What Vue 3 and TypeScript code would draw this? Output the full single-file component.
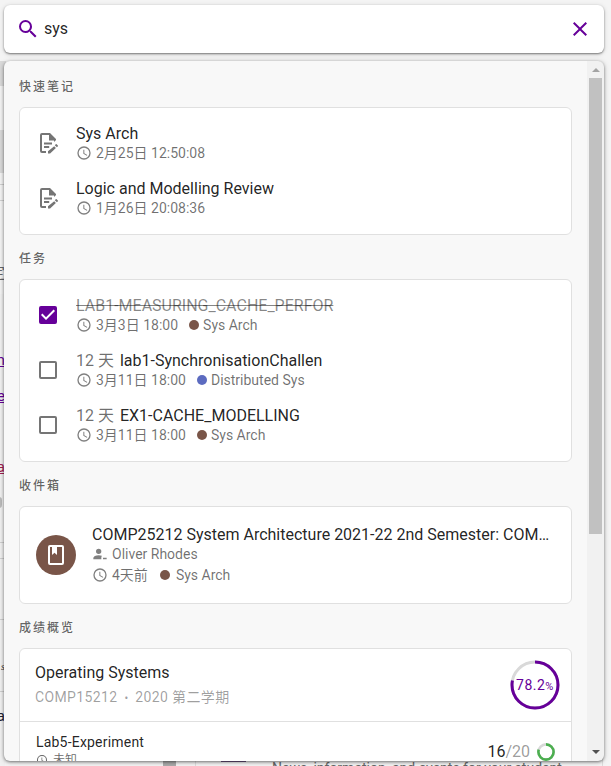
<script setup lang="ts">
interface Item {
  title: string
  time: string
  days?: string
  done?: boolean
  course?: string
  color?: string
}

const notes: Item[] = [
  { title: 'Sys Arch', time: '2月25日 12:50:08' },
  { title: 'Logic and Modelling Review', time: '1月26日 20:08:36' },
]

const tasks: Item[] = [
  { title: 'LAB1-MEASURING_CACHE_PERFOR', time: '3月3日 18:00', done: true, course: 'Sys Arch', color: 'brown' },
  { title: 'lab1-SynchronisationChallen', time: '3月11日 18:00', days: '12 天', course: 'Distributed Sys', color: 'indigo' },
  { title: 'EX1-CACHE_MODELLING', time: '3月11日 18:00', days: '12 天', course: 'Sys Arch', color: 'brown' },
]

const clock =
  'M12 20A8 8 0 1 0 12 4a8 8 0 0 0 0 16m0-18a10 10 0 1 1 0 20 10 10 0 0 1 0-20m.5 5v5.25l4.5 2.67-.75 1.23L11 13V7z'
</script>

<template>
  <div class="screen">
    <div class="backdrop">
      <i class="block b1"></i>
      <i class="block b2"></i>
      <i class="rule r1"></i>
      <i class="rule r2"></i>
      <i class="pale p1"></i>
      <span class="frag f1">定</span>
      <span class="frag link f2">m</span>
      <span class="frag link f3">e</span>
      <span class="frag link red f4">a</span>
      <i class="block b3"></i>
      <i class="rule r3"></i>
      <i class="rule r4"></i>
      <i class="rule r5"></i>
      <span class="frag serif f5">s</span>
      <i class="rule r6"></i>
      <span class="frag navy f6">a</span>
      <i class="block b4"></i>
      <i class="block b5"></i>
      <i class="below"></i>
      <span class="news">News, information, and events for your student</span>
    </div>

    <header class="search">
      <svg class="i24 purple" viewBox="0 0 24 24"><path d="M9.5 3A6.5 6.5 0 0 1 16 9.5c0 1.61-.59 3.09-1.56 4.23l.27.27h.79l5 5-1.5 1.5-5-5v-.79l-.27-.27A6.516 6.516 0 0 1 9.5 16a6.5 6.5 0 1 1 0-13m0 2C7 5 5 7 5 9.5S7 14 9.5 14 14 12 14 9.5 12 5 9.5 5" /></svg>
      <span class="query">sys</span>
      <svg class="i24 purple" viewBox="0 0 24 24"><path d="M19 6.41 17.59 5 12 10.59 6.41 5 5 6.41 10.59 12 5 17.59 6.41 19 12 13.41 17.59 19 19 17.59 13.41 12z" /></svg>
    </header>

    <main class="panel">
      <div class="content">
        <h2>快速笔记</h2>
        <section class="card list">
          <div v-for="n in notes" :key="n.title" class="row">
            <svg class="i24 grey" viewBox="0 0 24 24">
              <path d="M10 20H6V4h7v5h5v2.1l2-2V8l-6-6H6a2 2 0 0 0-2 2v16a2 2 0 0 0 2 2h4z" />
              <path d="M13 3v6.5h6.5z" />
              <path d="M8 11.6h8v1.9H8zM8 15h5.2v1.9H8z" />
              <path d="M20.2 13c.1 0 .3.1.4.2l1.3 1.3c.2.2.2.6 0 .8l-1 1-2.1-2.1 1-1c.1-.1.2-.2.4-.2m-2 2.2 1.7 1.7L14.1 22.4H12v-2.1z" />
            </svg>
            <div class="text">
              <div class="title">{{ n.title }}</div>
              <div class="meta"><svg class="i16" viewBox="0 0 24 24"><path :d="clock" /></svg><span>{{ n.time }}</span></div>
            </div>
          </div>
        </section>

        <h2>任务</h2>
        <section class="card list">
          <div v-for="t in tasks" :key="t.title" class="row">
            <svg v-if="t.done" class="i24 purple" viewBox="0 0 24 24"><path d="m10 17-5-5 1.41-1.42L10 14.17l7.59-7.59L19 8m0-5H5a2 2 0 0 0-2 2v14a2 2 0 0 0 2 2h14a2 2 0 0 0 2-2V5a2 2 0 0 0-2-2" /></svg>
            <svg v-else class="i24 grey" viewBox="0 0 24 24"><path d="M19 3H5a2 2 0 0 0-2 2v14a2 2 0 0 0 2 2h14a2 2 0 0 0 2-2V5a2 2 0 0 0-2-2m0 2v14H5V5z" /></svg>
            <div class="text">
              <div class="title" :class="{ done: t.done }"><span v-if="t.days" class="days">{{ t.days }}</span>{{ t.title }}</div>
              <div class="meta"><svg class="i16" viewBox="0 0 24 24"><path :d="clock" /></svg><span>{{ t.time }}</span><i class="dot" :class="t.color"></i><span>{{ t.course }}</span></div>
            </div>
          </div>
        </section>

        <h2>收件箱</h2>
        <section class="card list">
          <div class="row mail">
            <div class="avatar"><svg class="i24" viewBox="0 0 24 24"><path d="M18 2a2 2 0 0 1 2 2v16a2 2 0 0 1-2 2H6a2 2 0 0 1-2-2V4a2 2 0 0 1 2-2zm0 2h-5v8l-2.5-2.25L8 12V4H6v16h12z" /></svg></div>
            <div class="text">
              <div class="title clip">COMP25212 System Architecture 2021-22 2nd Semester: COMP25212 Lab</div>
              <div class="meta"><svg class="i16" viewBox="0 0 24 24"><path d="M10 4a4 4 0 1 1 0 8 4 4 0 0 1 0-8M14 20H2v-2c0-2.21 3.58-4 8-4 1.8 0 3.4.3 4.8.8L14 17zM16.5 17.8H22V20h-5.500z" /></svg><span>Oliver Rhodes</span></div>
              <div class="meta"><svg class="i16" viewBox="0 0 24 24"><path :d="clock" /></svg><span>4天前</span><i class="dot brown"></i><span>Sys Arch</span></div>
            </div>
          </div>
        </section>

        <h2>成绩概览</h2>
        <section class="card grades">
          <div class="course">
            <div class="text">
              <div class="title">Operating Systems</div>
              <div class="term">COMP15212 <b>•</b> 2020 第二学期</div>
            </div>
            <div class="ring">
              <svg viewBox="0 0 50 50"><circle class="track" cx="25" cy="25" r="23" /><circle class="bar" cx="25" cy="25" r="23" pathLength="100" stroke-dasharray="78.2 100" transform="rotate(-90 25 25)" /></svg>
              <span>78.2<small>%</small></span>
            </div>
          </div>
          <div class="grade">
            <div class="text">
              <div class="lab">Lab5-Experiment</div>
              <div class="unknown"><svg viewBox="0 0 24 24"><path :d="clock" /></svg><span>未知</span></div>
            </div>
            <div class="score">16<em>/20</em></div>
            <svg class="mini" viewBox="0 0 18 18"><circle class="track" cx="9" cy="9" r="7.6" /><circle class="bar" cx="9" cy="9" r="7.6" pathLength="100" stroke-dasharray="80 100" transform="rotate(-90 9 9)" /></svg>
          </div>
        </section>
      </div>
      <aside class="scroll">
        <i class="up"></i>
        <i class="thumb"></i>
        <i class="down"></i>
      </aside>
    </main>
  </div>
</template>

<style>
body { margin: 0; background: #f3f3f3; }
</style>

<style scoped>
* { box-sizing: border-box; }
.screen {
  position: relative;
  width: 611px;
  height: 766px;
  overflow: hidden;
  padding: 5px 7px 0 4px;
  background: #f4f4f4;
  font-family: Roboto, "Noto Sans CJK SC", sans-serif;
  color: rgba(0, 0, 0, 0.87);
}
svg { display: block; fill: currentColor; flex: none; }
.i24 { width: 24px; height: 24px; }
.i16 { width: 16px; height: 16px; }
.purple { color: #609; }
.grey { color: #757575; }

.backdrop { position: absolute; inset: 0; overflow: hidden; }
.backdrop > * { position: absolute; }
.block { background: #dadada; }
.b1 { left: 0; top: 61px; width: 6px; height: 25px; }
.b2 { left: 0; top: 130px; width: 5px; height: 43px; }
.b3 { left: -4px; top: 497px; width: 6px; height: 11px; border-radius: 3px; background: #bbb; }
.b4 { left: 163px; top: 755px; width: 13px; height: 11px; background: #aaa; }
.b5 { left: 221px; top: 755px; width: 25px; height: 7px; background: #6b5380; }
.pale { left: 0; top: 294px; width: 5px; height: 472px; background: #f1f1f1; }
.rule { left: 0; width: 5px; height: 1px; background: #d0d0d0; }
.r1 { top: 184px; } .r2 { top: 200px; } .r3 { top: 542px; }
.r4 { top: 558px; } .r5 { top: 619px; } .r6 { top: 691px; }
.frag { width: 15px; right: 606px; text-align: right; font-size: 15px; line-height: 18px; color: #666; }
.link { color: #609; text-decoration: underline; }
.red { color: #a02050; }
.f1 { top: 264px; } .f2 { top: 351px; } .f3 { top: 387px; } .f4 { top: 458px; }
.serif { font: italic 10px/12px "Liberation Serif", serif; color: #333; }
.f5 { top: 661px; } .f6 { top: 707px; }
.navy { color: #223; }
.below { left: 195px; top: 755px; width: 408px; height: 11px; border: solid #ddd; border-width: 0 1px; }
.news { left: 272px; top: 758px; white-space: nowrap; font-size: 14px; line-height: 20px; color: #666; }

.search {
  position: relative;
  display: flex;
  align-items: center;
  width: 600px;
  height: 48px;
  padding: 0 12px;
  border-radius: 6px;
  background: #fff;
  box-shadow: 0 1px 2px rgba(0, 0, 0, 0.45), 0 1px 5px rgba(0, 0, 0, 0.16);
}
.query { flex: 1; padding-left: 4px; font-size: 16px; line-height: 24px; }

.panel {
  position: relative;
  display: flex;
  width: 600px;
  height: 700px;
  margin-top: 8px;
  overflow: hidden;
  border-radius: 6px;
  background: #f8f8f8;
}
.screen::after {
  content: "";
  position: absolute;
  inset: 61px 7px 5px 4px;
  border-radius: 6px;
  box-shadow: 0 1px 3px rgba(0, 0, 0, 0.45), 0 1px 6px rgba(0, 0, 0, 0.18);
}
.content { flex: 1; min-width: 0; padding: 2px 15px 0; }
h2 {
  height: 44px;
  margin: 0;
  padding-top: 2px;
  font-size: 12px;
  line-height: 44px;
  font-weight: 500;
  letter-spacing: 2px;
  color: rgba(0, 0, 0, 0.62);
}
.card { border: 1px solid #e0e0e0; border-radius: 6px; background: #fff; }
.list { padding: 8px 0; }
.row { display: flex; align-items: center; height: 55px; padding: 0 16px 1px; gap: 16px; }
.text { flex: 1; min-width: 0; }
.title { font-size: 16px; line-height: 20px; white-space: nowrap; }
.row .title { padding-top: 1px; height: 20px; }
.clip { overflow: hidden; text-overflow: ellipsis; }
.done { color: rgba(0, 0, 0, 0.48); text-decoration: line-through; }
.days { margin-right: 6px; color: rgba(0, 0, 0, 0.57); }
.meta { display: flex; align-items: center; height: 20px; font-size: 14px; line-height: 20px; color: rgba(0, 0, 0, 0.57); white-space: nowrap; }
.meta svg { margin-right: 4px; color: #808080; }
.dot { width: 10px; height: 10px; margin: 0 4px 0 11px; border-radius: 50%; }
.brown { background: #795548; }
.indigo { background: #5c6bc0; }
.row.mail { height: 80px; padding-bottom: 0; }
.avatar { display: flex; align-items: center; justify-content: center; flex: none; width: 40px; height: 40px; border-radius: 50%; background: #795548; color: #fff; }
.mail .meta:last-child { height: 22px; }
.mail .dot { margin: 0 6px 0 12px; }

.course { display: flex; align-items: center; height: 73px; padding: 0 11px 0 15px; border-bottom: 1px solid #e0e0e0; }
.course .text { padding-top: 2px; }
.course .title { line-height: 24px; }
.term { font-size: 14px; line-height: 24px; letter-spacing: 0.38px; color: rgba(0, 0, 0, 0.38); }
.term b { margin: 0 3px; font-size: 10px; }
.ring { position: relative; display: grid; place-items: center; width: 50px; height: 50px; font-size: 14px; letter-spacing: 0.5px; color: #609; }
.ring > * { grid-area: 1 / 1; }
.ring svg { width: 50px; height: 50px; }
small { font-size: 11px; }
circle { fill: none; }
.track { stroke: #d9d9d9; }
.ring circle { stroke-width: 3; }
.ring .bar { stroke: #609; }
.grade { display: flex; align-items: center; height: 59px; padding: 0 16px; }
.grade .text { padding-bottom: 3px; }
.lab { font-size: 14px; line-height: 20px; letter-spacing: 0.2px; }
.unknown { display: flex; align-items: center; gap: 5px; font-size: 12px; line-height: 16px; color: rgba(0, 0, 0, 0.6); }
.unknown svg { width: 12px; height: 12px; }
.score { margin-right: 7px; font-size: 16px; }
em { font-style: normal; color: rgba(0, 0, 0, 0.4); }
.mini { width: 18px; height: 18px; }
.mini circle { stroke-width: 2.6; }
.mini .bar { stroke: #4caf50; }

.scroll { display: flex; flex-direction: column; align-items: center; width: 17px; background: #f1f1f1; }
.up, .down { width: 0; height: 0; border: solid transparent; border-width: 0 4px; }
.up { margin: 7px 0 6px; border-bottom: 4px solid #a3a3a3; }
.thumb { width: 13px; height: 456px; background: #c1c1c1; }
.down { margin-top: auto; margin-bottom: 7px; border-top: 4px solid #505050; }
</style>
